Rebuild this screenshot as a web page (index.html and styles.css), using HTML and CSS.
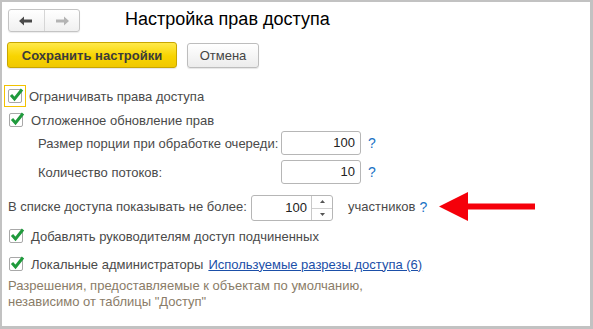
FILE: index.html
```html
<!DOCTYPE html>
<html lang="ru">
<head>
<meta charset="utf-8">
<link rel="stylesheet" href="styles.css">
</head>
<body>
<div class="frame">
  <div class="topbar">
    <div class="nav">
      <span class="navbtn">
        <svg width="14" height="10" viewBox="0 0 14 10"><path d="M0 5 L5 0.5 L5 3.5 L13 3.5 L13 6.5 L5 6.5 L5 9.5 Z" fill="#4a4a4a"/></svg>
      </span>
      <span class="navbtn">
        <svg width="14" height="10" viewBox="0 0 14 10"><path d="M14 5 L9 0.5 L9 3.5 L1 3.5 L1 6.5 L9 6.5 L9 9.5 Z" fill="#b4b4b4"/></svg>
      </span>
    </div>
    <div class="title">Настройка прав доступа</div>
  </div>
  <div class="actions">
    <button class="btn primary">Сохранить настройки</button>
    <button class="btn">Отмена</button>
  </div>

  <div class="row cb-row first">
    <span class="focus"><span class="cb"><svg class="chk" width="15" height="14" viewBox="0 0 15 14"><path d="M2 7 L5.5 11 L13 1.5" fill="none" stroke="#1f9a3c" stroke-width="3"/></svg></span></span>
    <span class="label">Ограничивать права доступа</span>
  </div>
  <div class="row cb-row second">
    <span class="cb"><svg class="chk" width="15" height="14" viewBox="0 0 15 14"><path d="M2 7 L5.5 11 L13 1.5" fill="none" stroke="#1f9a3c" stroke-width="3"/></svg></span>
    <span class="label">Отложенное обновление прав</span>
  </div>

  <div class="field f1">
    <span class="flabel">Размер порции при обработке очереди:</span>
    <span class="input">100</span>
    <span class="q">?</span>
  </div>
  <div class="field f2">
    <span class="flabel">Количество потоков:</span>
    <span class="input">10</span>
    <span class="q">?</span>
  </div>

  <div class="spinrow">
    <span class="slabel">В списке доступа показывать не более:</span>
    <span class="spin">
      <span class="spinval">100</span>
      <span class="spinbtns">
        <span class="sb"><svg width="5" height="3" viewBox="0 0 5 3"><path d="M0 3 L2.5 0 L5 3Z" fill="#555"/></svg></span>
        <span class="sb"><svg width="5" height="3" viewBox="0 0 5 3"><path d="M0 0 L2.5 3 L5 0Z" fill="#555"/></svg></span>
      </span>
    </span>
    <span class="unit">участников</span>
    <span class="q">?</span>
    <svg class="arrow" width="97" height="29" viewBox="0 0 97 29"><path d="M0 14.5 L29 0 L29 11.5 L96 11.5 L96 17.5 L29 17.5 L29 29 Z" fill="#f5000a"/></svg>
  </div>

  <div class="row cb-row third">
    <span class="cb"><svg class="chk" width="15" height="14" viewBox="0 0 15 14"><path d="M2 7 L5.5 11 L13 1.5" fill="none" stroke="#1f9a3c" stroke-width="3"/></svg></span>
    <span class="label">Добавлять руководителям доступ подчиненных</span>
  </div>
  <div class="row cb-row fourth">
    <span class="cb"><svg class="chk" width="15" height="14" viewBox="0 0 15 14"><path d="M2 7 L5.5 11 L13 1.5" fill="none" stroke="#1f9a3c" stroke-width="3"/></svg></span>
    <span class="label">Локальные администраторы</span>
    <a class="link" href="#">Используемые разрезы доступа (6)</a>
  </div>
  <p class="help">Разрешения, предоставляемые к объектам по умолчанию,<br>независимо от таблицы "Доступ"</p>
</div>
</body>
</html>
```

FILE: styles.css
```css
* { box-sizing: border-box; }
html, body { margin: 0; padding: 0; background: #fff; }
body {
  font-family: "Liberation Sans", Arial, sans-serif;
  font-size: 13px;
  color: #4a4a4a;
}
.frame {
  width: 593px;
  height: 329px;
  border-style: solid;
  border-color: #c2c2c2;
  border-width: 2px 3px 3px 2px;
  background: #fff;
  padding: 0 0 0 5px;
  overflow: hidden;
}
.topbar {
  display: flex;
  align-items: center;
  height: 23px;
  margin-top: 7px;
  padding-left: 1px;
}
.nav {
  display: flex;
  width: 72px;
  height: 23px;
  border: 1px solid #c4c4c4;
  border-radius: 3px;
  background: linear-gradient(#ffffff, #f0f0f0);
  box-shadow: 0 1px 1px rgba(0,0,0,0.08);
}
.navbtn {
  flex: 1;
  display: flex;
  align-items: center;
  justify-content: center;
}
.navbtn + .navbtn { border-left: 1px solid #d6d6d6; }
.title {
  margin-left: 45px;
  font-size: 18px;
  color: #000;
  position: relative;
  top: -1px;
}
.actions {
  display: flex;
  gap: 10px;
  margin-top: 10px;
  height: 26px;
}
.btn {
  font-family: "Liberation Sans", Arial, sans-serif;
  font-size: 13px;
  height: 26px;
  padding: 0 14px;
  border-radius: 3px;
  border: 1px solid #bdbdbd;
  background: linear-gradient(#ffffff, #ececec);
  color: #444;
  box-shadow: 0 1px 1px rgba(0,0,0,0.1);
}
.btn.primary {
  width: 170px;
  padding: 0;
  font-weight: bold;
  color: #3b3b3b;
  border-color: #c8a600;
  background: linear-gradient(#ffe94a, #f8d400 55%, #f0c800);
}
.btn + .btn { margin-top: 1px; height: 25px; width: 72px; padding: 0; }
.row { display: flex; align-items: center; }
.cb-row { height: 20px; }
.cb-row.first { margin-top: 17px; margin-left: -3px; height: 22px; }
.cb-row.second { margin-top: 3px; }
.focus {
  width: 22px;
  height: 22px;
  border: 1px solid #f2c200;
  display: flex;
  align-items: center;
  justify-content: center;
  margin-right: 3px;
}
.cb {
  position: relative;
  width: 14px;
  height: 14px;
  border: 1px solid #a8a8a8;
  border-radius: 2px;
  background: #fff;
  flex: none;
}
.cb-row:not(.first) .cb { margin-left: 2px; margin-right: 8px; }
.chk { position: absolute; left: 0; top: -2px; }
.label { color: #4a4a4a; }
.field {
  display: flex;
  align-items: center;
  height: 24px;
  padding-left: 31px;
}
.field.f1 { margin-top: 1px; }
.field.f2 { margin-top: 5px; }
.flabel { width: 243px; }
.input {
  width: 80px;
  height: 24px;
  border: 1px solid #b6b6b6;
  border-radius: 3px;
  text-align: right;
  padding-right: 5px;
  line-height: 22px;
  color: #222;
}
.q {
  color: #1a72c4;
  margin-left: 7px;
  font-size: 14px;
}
.spinrow {
  display: flex;
  align-items: center;
  height: 29px;
  margin-top: 8px;
  padding-left: 1px;
}
.spinrow .q { margin-left: 4px; }
.slabel { width: 243px; }
.spin {
  display: flex;
  width: 82px;
  height: 26px;
  border: 1px solid #b6b6b6;
  border-radius: 3px;
  margin-top: 3px;
}
.spinval {
  flex: 1;
  text-align: right;
  padding-right: 4px;
  line-height: 24px;
  color: #222;
}
.spinbtns {
  width: 21px;
  display: flex;
  flex-direction: column;
  border-left: 1px solid #c8c8c8;
}
.sb { flex: 1; display: flex; align-items: center; justify-content: center; }
.sb + .sb { border-top: 1px solid #d0d0d0; }
.unit { margin-left: 15px; }
.arrow { margin-left: 12px; }
.cb-row.third { margin-top: 5px; }
.cb-row.fourth { margin-top: 8px; }
.link {
  color: #1b4fa8;
  margin-left: 5px;
  text-decoration: underline;
}
.help {
  margin: 4px 0 0 1px;
  color: #8a7c68;
  line-height: 16px;
}
```
